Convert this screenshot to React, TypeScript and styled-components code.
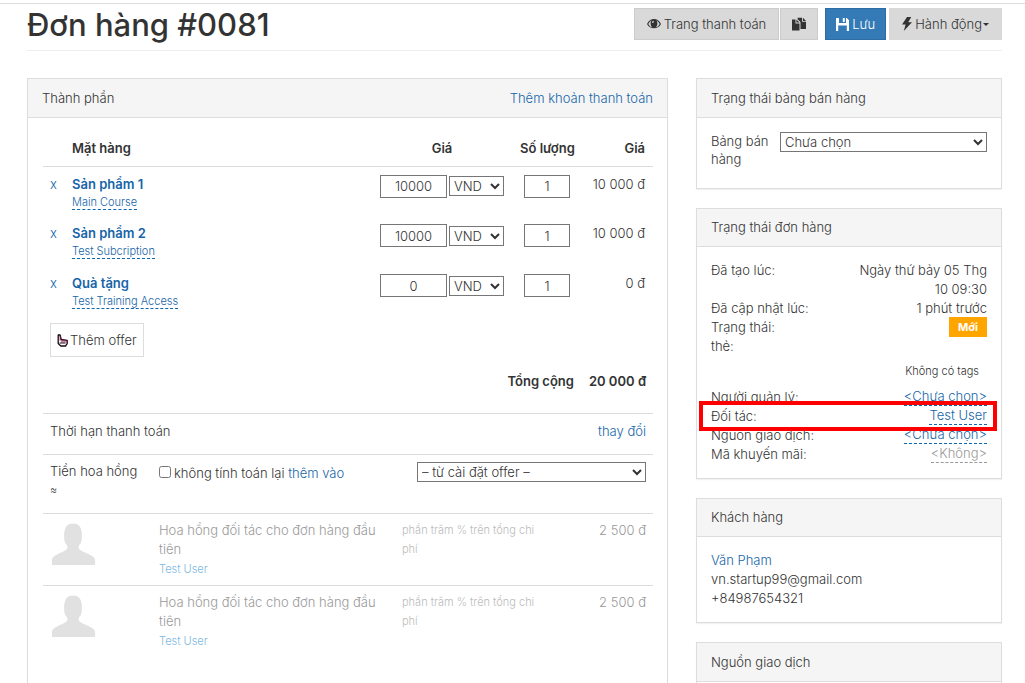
import React from "react";
import styled, { createGlobalStyle } from "styled-components";

const Global = createGlobalStyle`
  *, *::before, *::after { box-sizing: border-box; }
  body { margin: 0; background: #fff; }
  body, button, input, select {
    font-family: Inter, "Noto Sans", sans-serif;
    font-size: 13px;
    font-weight: 300;
    line-height: 19px;
    color: #333;
  }
`;

const Page = styled.div`
  height: 100vh;
  overflow: hidden;
  display: flex;
  flex-direction: column;
  padding: 3px 0 0;
`;

const Content = styled.main`
  flex: 1;
  border-top: 1px solid #ddd;
  padding: 0 23px 0 27px;
  display: flex;
  flex-direction: column;
`;

const Header = styled.header`
  display: flex;
  justify-content: space-between;
  align-items: flex-start;
  height: 47px;
  padding-top: 4px;
  border-bottom: 1px solid #eee;
`;

const Title = styled.h1`
  margin: 0;
  font-size: 31px;
  line-height: 34px;
  font-weight: 500;
`;

const Toolbar = styled.div`
  display: flex;
  gap: 1px;
`;

const ToolButton = styled.button<{ $kind?: "primary" | "flat"; $push?: number; $pad?: number }>`
  display: flex;
  align-items: center;
  justify-content: center;
  gap: 3px;
  height: 32px;
  padding: 0 ${(p) => p.$pad ?? 12}px;
  margin-left: ${(p) => p.$push ?? 0}px;
  border: 1px solid ${(p) => (p.$kind === "primary" ? "#2e6da4" : p.$kind === "flat" ? "#d9d9d9" : "#ccc")};
  background: ${(p) => (p.$kind === "primary" ? "#337ab7" : "#d9d9d9")};
  color: ${(p) => (p.$kind === "primary" ? "#fff" : "#333")};
  white-space: nowrap;
`;

const Caret = styled.span`
  border: 3px solid transparent;
  border-top-color: #333;
  border-bottom: 0;
  margin-left: -2px;
`;

const Columns = styled.div`
  flex: 1;
  min-height: 0;
  display: grid;
  grid-template-columns: 641fr 306fr;
  gap: 28px;
  padding-top: 27px;
`;

const Side = styled.aside`
  display: flex;
  flex-direction: column;
  gap: 19px;
`;

const Panel = styled.section`
  border: 1px solid #ddd;
  background: #fff;
  box-shadow: 0 1px 1px rgba(0, 0, 0, 0.05);
`;

const PanelHead = styled.div<{ $tight?: boolean }>`
  display: flex;
  justify-content: space-between;
  padding: ${(p) => (p.$tight ? 9 : 10)}px 14px 9px;
  background: #f5f5f5;
  border-bottom: 1px solid #ddd;
`;

const PanelTitle = styled.h2`
  margin: 0;
  font-size: 13px;
  font-weight: 300;
`;

const PanelBody = styled.div<{ $left?: number; $bottom?: number }>`
  padding: 14px 14px ${(p) => p.$bottom ?? 14}px ${(p) => p.$left ?? 14}px;
`;

const Link = styled.a<{ $bold?: boolean; $dashed?: boolean; $small?: boolean; $muted?: boolean; $pale?: boolean }>`
  color: ${(p) => (p.$muted ? "#999" : p.$pale ? "#80b8e0" : "#1665a8")};
  text-decoration: none;
  font-weight: ${(p) => (p.$bold ? 600 : 300)};
  font-size: ${(p) => (p.$small ? 11 : 13)}px;
  line-height: ${(p) => (p.$small ? 14 : p.$dashed ? 17 : 19)}px;
  ${(p) => p.$dashed && `display: inline-block; vertical-align: top; border-bottom: 1px dashed ${p.$muted ? "#999" : "#0a67b0"};`}
`;

const Table = styled.table`
  width: 100%;
  table-layout: fixed;
  border-collapse: collapse;
`;

const Col = styled.col<{ $w?: number }>`
  width: ${(p) => (p.$w ? `${p.$w}px` : "auto")};
`;

const HeadCell = styled.th<{ $align?: string }>`
  height: 34px;
  padding: 0 8px 1px;
  text-align: ${(p) => p.$align ?? "left"};
  font-weight: 600;
  white-space: nowrap;
  border-bottom: 1px solid #ddd;
`;

const Cell = styled.td<{ $align?: string }>`
  height: 50px;
  padding: 8px 8px 0;
  vertical-align: top;
  text-align: ${(p) => p.$align ?? "left"};
`;

const Stack = styled.div`
  display: flex;
  flex-direction: column;
  align-items: flex-start;
  gap: 1px;
`;

const Remove = styled.button`
  border: 0;
  padding: 0;
  background: none;
  color: #1665a8;
`;

const RemoveCell = styled(Cell)`
  padding: 8px 0 0 7px;
`;

const PriceGroup = styled.div`
  display: flex;
  align-items: center;
  justify-content: flex-end;
  gap: 2px;
`;

const Field = styled.input<{ $w: number }>`
  width: ${(p) => p.$w}px;
  height: 23px;
  padding: 0;
  border: 1px solid #767676;
  text-align: center;
`;

const Select = styled.select<{ $w?: number }>`
  width: ${(p) => (p.$w ? `${p.$w}px` : "100%")};
  height: 20px;
  padding: 0;
  border: 1px solid #767676;
  border-radius: 0;
  background-color: #fff;
`;

const OfferButton = styled.button`
  display: flex;
  align-items: center;
  gap: 1px;
  height: 34px;
  margin: 7px 0 0 7px;
  padding: 0 6px;
  border: 1px solid #ddd;
  background: #fff;
`;

const Total = styled.div`
  display: flex;
  justify-content: flex-end;
  gap: 15px;
  padding: 15px 7px 22px;
  font-weight: 600;
`;

const TermRow = styled.div`
  display: flex;
  justify-content: space-between;
  height: 41px;
  padding: 8px 7px 0;
  border-top: 1px solid #ddd;
`;

const FeeCell = styled.td<{ $tone?: string; $align?: string; $tall?: boolean }>`
  padding: ${(p) => (p.$tall ? "7px 7px 13px" : "7px")};
  vertical-align: top;
  border-top: 1px solid #ddd;
  color: ${(p) => p.$tone ?? "inherit"};
  text-align: ${(p) => p.$align ?? "left"};
`;

const Small = styled.span`
  display: block;
  font-size: 11px;
`;

const CheckLine = styled.div`
  display: flex;
  align-items: center;
  gap: 3px;
  padding-top: 2px;
  white-space: nowrap;
`;

const Check = styled.input`
  width: 12px;
  height: 12px;
  margin: 0 0 4px;
`;

const FieldRow = styled.div`
  display: grid;
  grid-template-columns: 69px 1fr;
  line-height: 18px;
`;

const List = styled.dl`
  margin: 0;
`;

const Row = styled.div`
  position: relative;
  display: flex;
  justify-content: space-between;
`;

const Value = styled.dd`
  margin: 0;
  max-width: 130px;
  text-align: right;
`;

const Term = styled.dt`
  margin: 0;
`;

const Tags = styled.dd`
  margin: 0;
  padding: 6px 8px 7px;
  text-align: right;
  font-size: 11px;
`;

const Badge = styled.span`
  display: block;
  height: 20px;
  margin-top: -1px;
  padding: 0 9px;
  line-height: 20px;
  background: #ffa500;
  color: #fff;
  font-size: 11px;
  font-weight: 700;
`;

const Highlight = styled.span`
  position: absolute;
  inset: -6px -10px -5px -12px;
  border: 4px solid #f00;
  pointer-events: none;
  z-index: 1;
`;

const Lines = styled.div`
  display: flex;
  flex-direction: column;
`;

const EyeIcon = () => (
  <svg width="14" height="12" viewBox="0 0 14 12" aria-hidden="true">
    <path fill="#333" fillRule="evenodd" d="M0 6C3-.6 11-.6 14 6 11 11.800 3 11.800 0 6Zm1.300 0C2.300 8 3.900 9.200 5.600 9.500 3.200 7.600 3 4.300 4.600 2.500 3.200 3.200 2 4.400 1.300 6Zm11.400 0C12 4.400 10.800 3.200 9.400 2.500 11 4.300 10.800 7.600 8.400 9.500 10.100 9.200 11.700 8 12.700 6ZM5 4.300C5.300 5.200 6.300 5.100 6.700 4.300 7 3.600 6.700 3 6.200 2.700 5.500 3 5.100 3.600 5 4.300Z" />
  </svg>
);

const CopyIcon = () => (
  <svg width="14" height="14" viewBox="0 0 14 14" aria-hidden="true">
    <path fill="#333" d="M0 2.500h3.500v4h4v7H0ZM4.400 2.500l3.100 3.100H4.400ZM5.600.8H10v4h4V12H8.500V5.100L5.600 2.200ZM10.900.8 14 3.900h-3.100Z" />
  </svg>
);

const SaveIcon = () => (
  <svg width="13" height="13" viewBox="0 0 13 13" aria-hidden="true">
    <path fill="#fff" d="M0 0h3v5h7V0h.8L13 2.200V13h-2.200V7.500H2.200V13H0ZM6.800 0h2v4h-2Z" />
  </svg>
);

const FlashIcon = () => (
  <svg width="10" height="14" viewBox="0 0 10 14" aria-hidden="true">
    <path fill="#333" d="M5 0 0 7.500h3.600L1.800 14 10 5.200H6.300L9.200 0Z" />
  </svg>
);

const HandIcon = () => (
  <svg width="12" height="13" viewBox="0 0 12 13" aria-hidden="true">
    <path fill="#fff" stroke="#1c0a14" strokeWidth="1.300" strokeLinejoin="round" d="M1.200 1h1.900l1.100 4.500 6 .8v3.400L8.500 12H3.800L1.200 9.500Z" />
    <path fill="none" stroke="#8a1048" strokeWidth="1" d="M3.200 2v4.500M5 5.500v3M7 6v2.500M9 6.500v2" />
    <path fill="none" stroke="#1c0a14" strokeWidth="1" d="M2.500 9h6" />
  </svg>
);

const AvatarArt = styled.svg`
  display: block;
  margin: 2px;
`;

const Avatar = () => (
  <AvatarArt width="44" height="42" viewBox="0 0 44 42" aria-hidden="true">
    <path fill="#e1e1e1" d="M0 42V37C0 32 10 30 14.500 26.500 16 25.300 15.500 23.500 14.500 21.500 13.200 20.500 12 17.500 12.200 15 11.600 5 14.500.500 21 .500S30.500 5 29.800 15C30 17.500 28.800 20.500 27.500 21.500 26.500 23.500 26 25.300 27.500 26.500 32 30 43 32 43 37V42Z" />
  </AvatarArt>
);

const items = [
  { name: "Sản phẩm 1", access: "Main Course", price: "10000", sum: "10 000 đ" },
  { name: "Sản phẩm 2", access: "Test Subcription", price: "10000", sum: "10 000 đ" },
  { name: "Quà tặng", access: "Test Training Access", price: "0", sum: "0 đ" },
];

export default function App() {
  return (
    <Page>
      <Global />
      <Content>
        <Header>
          <Title>Đơn hàng #0081</Title>
          <Toolbar>
            <ToolButton type="button"><EyeIcon />Trang thanh toán</ToolButton>
            <ToolButton type="button" $pad={11} aria-label="Sao chép"><CopyIcon /></ToolButton>
            <ToolButton type="button" $kind="primary" $push={6} $pad={10}><SaveIcon />Lưu</ToolButton>
            <ToolButton type="button" $kind="flat" $push={2}><FlashIcon />Hành động<Caret /></ToolButton>
          </Toolbar>
        </Header>
        <Columns>
          <Panel>
            <PanelHead>
              <PanelTitle>Thành phần</PanelTitle>
              <Link href="#payment">Thêm khoản thanh toán</Link>
            </PanelHead>
            <PanelBody $left={15}>
              <Table>
                <colgroup>
                  <Col $w={21} />
                  <Col />
                  <Col $w={140} />
                  <Col $w={70} />
                  <Col $w={71} />
                </colgroup>
                <thead>
                  <tr>
                    <HeadCell />
                    <HeadCell>Mặt hàng</HeadCell>
                    <HeadCell $align="center">Giá</HeadCell>
                    <HeadCell $align="center">Số lượng</HeadCell>
                    <HeadCell $align="right">Giá</HeadCell>
                  </tr>
                </thead>
                <tbody>
                  {items.map((it) => (
                    <tr key={it.name}>
                      <RemoveCell><Remove type="button">x</Remove></RemoveCell>
                      <Cell>
                        <Stack>
                          <Link href="#item" $bold>{it.name}</Link>
                          <Link href="#access" $dashed $small>{it.access}</Link>
                        </Stack>
                      </Cell>
                      <Cell>
                        <PriceGroup>
                          <Field $w={67} defaultValue={it.price} aria-label="Giá" />
                          <Select $w={55} aria-label="Tiền tệ"><option>VND</option></Select>
                        </PriceGroup>
                      </Cell>
                      <Cell $align="center"><Field $w={46} defaultValue="1" aria-label="Số lượng" /></Cell>
                      <Cell $align="right">{it.sum}</Cell>
                    </tr>
                  ))}
                </tbody>
              </Table>
              <OfferButton type="button"><HandIcon />Thêm offer</OfferButton>
              <Total><span>Tổng cộng</span><span>20 000 đ</span></Total>
              <TermRow>
                <span>Thời hạn thanh toán</span>
                <Link href="#term">thay đổi</Link>
              </TermRow>
              <Table>
                <colgroup>
                  <Col $w={109} />
                  <Col $w={243} />
                  <Col />
                  <Col $w={97} />
                </colgroup>
                <tbody>
                  <tr>
                    <FeeCell $tall>Tiền hoa hồng <Small>≈</Small></FeeCell>
                    <FeeCell $tall>
                      <CheckLine>
                        <Check type="checkbox" id="norecalc" />
                        <span><label htmlFor="norecalc">không tính toán lại</label> <Link href="#add">thêm vào</Link></span>
                      </CheckLine>
                    </FeeCell>
                    <FeeCell $tall $align="right" colSpan={2}>
                      <Select $w={229} aria-label="Cài đặt"><option>– từ cài đặt offer –</option></Select>
                    </FeeCell>
                  </tr>
                  {[1, 2].map((n) => (
                    <tr key={n}>
                      <FeeCell><Avatar /></FeeCell>
                      <FeeCell $tone="#999">
                        Hoa hồng đối tác cho đơn hàng đầu tiên<br />
                        <Link href="#partner" $small $pale>Test User</Link>
                      </FeeCell>
                      <FeeCell $tone="#bbb"><Small>phần trăm % trên tổng chi phí</Small></FeeCell>
                      <FeeCell $tone="#999" $align="right">2 500 đ</FeeCell>
                    </tr>
                  ))}
                </tbody>
              </Table>
            </PanelBody>
          </Panel>
          <Side>
            <Panel>
              <PanelHead><PanelTitle>Trạng thái bảng bán hàng</PanelTitle></PanelHead>
              <PanelBody $bottom={20}>
                <FieldRow>
                  <label htmlFor="board">Bảng bán hàng</label>
                  <Select id="board"><option>Chưa chọn</option></Select>
                </FieldRow>
              </PanelBody>
            </Panel>
            <Panel>
              <PanelHead $tight><PanelTitle>Trạng thái đơn hàng</PanelTitle></PanelHead>
              <PanelBody>
                <List>
                  <Row><Term>Đã tạo lúc:</Term><Value>Ngày thứ bảy 05 Thg 10 09:30</Value></Row>
                  <Row><Term>Đã cập nhật lúc:</Term><Value>1 phút trước</Value></Row>
                  <Row><Term>Trạng thái:</Term><Value><Badge>Mới</Badge></Value></Row>
                  <Term>thẻ:</Term>
                  <Tags>Không có tags</Tags>
                  <Row><Term>Người quản lý:</Term><Value><Link href="#manager" $dashed>&lt;Chưa chọn&gt;</Link></Value></Row>
                  <Row><Term>Đối tác:</Term><Value><Link href="#partner" $dashed>Test User</Link></Value><Highlight /></Row>
                  <Row><Term>Nguồn giao dịch:</Term><Value><Link href="#source" $dashed>&lt;Chưa chọn&gt;</Link></Value></Row>
                  <Row><Term>Mã khuyến mãi:</Term><Value><Link href="#promo" $dashed $muted>&lt;Không&gt;</Link></Value></Row>
                </List>
              </PanelBody>
            </Panel>
            <Panel>
              <PanelHead $tight><PanelTitle>Khách hàng</PanelTitle></PanelHead>
              <PanelBody>
                <Lines>
                  <Link href="#customer">Văn Phạm</Link>
                  <span>vn.startup99@gmail.com</span>
                  <span>+84987654321</span>
                </Lines>
              </PanelBody>
            </Panel>
            <Panel>
              <PanelHead><PanelTitle>Nguồn giao dịch</PanelTitle></PanelHead>
              <PanelBody />
            </Panel>
          </Side>
        </Columns>
      </Content>
    </Page>
  );
}
